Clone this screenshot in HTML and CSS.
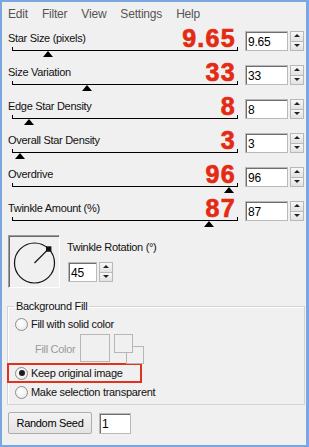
FILE: index.html
```html
<!DOCTYPE html>
<html lang="en">
<head>
  <meta charset="UTF-8">
  <title>Twinkle</title>
  <link rel="stylesheet" href="styles.css">
</head>
<body>
  <div class="window">
    <div class="menubar">
      <span>Edit</span><span>Filter</span><span>View</span><span>Settings</span><span>Help</span>
    </div>

    <div class="params">
      <div class="param">
        <div class="param-main">
          <div class="param-head"><span class="param-label">Star Size (pixels)</span><span class="param-big">9.65</span></div>
          <div class="track"><span class="thumb" style="left:16%"></span></div>
        </div>
        <div class="spin-field"><input class="num" value="9.65"><div class="spin-btns"><span class="up"></span><span class="down"></span></div></div>
      </div>
      <div class="param">
        <div class="param-main">
          <div class="param-head"><span class="param-label">Size Variation</span><span class="param-big">33</span></div>
          <div class="track"><span class="thumb" style="left:33%"></span></div>
        </div>
        <div class="spin-field"><input class="num" value="33"><div class="spin-btns"><span class="up"></span><span class="down"></span></div></div>
      </div>
      <div class="param">
        <div class="param-main">
          <div class="param-head"><span class="param-label">Edge Star Density</span><span class="param-big">8</span></div>
          <div class="track"><span class="thumb" style="left:7.5%"></span></div>
        </div>
        <div class="spin-field"><input class="num" value="8"><div class="spin-btns"><span class="up"></span><span class="down"></span></div></div>
      </div>
      <div class="param">
        <div class="param-main">
          <div class="param-head"><span class="param-label">Overall Star Density</span><span class="param-big">3</span></div>
          <div class="track"><span class="thumb" style="left:3.5%"></span></div>
        </div>
        <div class="spin-field"><input class="num" value="3"><div class="spin-btns"><span class="up"></span><span class="down"></span></div></div>
      </div>
      <div class="param">
        <div class="param-main">
          <div class="param-head"><span class="param-label">Overdrive</span><span class="param-big">96</span></div>
          <div class="track"><span class="thumb" style="left:96%"></span></div>
        </div>
        <div class="spin-field"><input class="num" value="96"><div class="spin-btns"><span class="up"></span><span class="down"></span></div></div>
      </div>
      <div class="param">
        <div class="param-main">
          <div class="param-head"><span class="param-label">Twinkle Amount (%)</span><span class="param-big">87</span></div>
          <div class="track"><span class="thumb" style="left:87%"></span></div>
        </div>
        <div class="spin-field"><input class="num" value="87"><div class="spin-btns"><span class="up"></span><span class="down"></span></div></div>
      </div>
    </div>

    <div class="rotation">
      <div class="dial">
        <svg width="50" height="51" viewBox="0 0 50 51">
          <circle cx="25.5" cy="27" r="20" fill="none" stroke="#111" stroke-width="1.2"/>
          <line x1="25.5" y1="27" x2="39.6" y2="12.9" stroke="#111" stroke-width="1.2"/>
          <rect x="37" y="10.3" width="5.4" height="5.4" fill="#111"/>
        </svg>
      </div>
      <div class="rot-side">
        <span class="rot-label">Twinkle Rotation (°)</span>
        <div class="spin-field small"><input class="num" value="45"><div class="spin-btns"><span class="up"></span><span class="down"></span></div></div>
      </div>
    </div>

    <fieldset class="group">
      <legend>Background Fill</legend>
      <div class="radio-row first"><span class="radio"></span>Fill with solid color</div>
      <div class="fill-color">
        <span class="fill-label">Fill Color</span>
        <span class="swatch"></span>
        <span class="swatches"><span class="sw-front"></span><span class="sw-back"></span></span>
      </div>
      <div class="radio-row marked"><span class="radio checked"></span>Keep original image</div>
      <div class="radio-row"><span class="radio"></span>Make selection transparent</div>
    </fieldset>

    <div class="seed-row">
      <button class="btn">Random Seed</button>
      <input class="num seed" value="1">
    </div>
  </div>
</body>
</html>
```

FILE: styles.css
```css
body { margin: 0; font-family: "Liberation Sans", Arial, sans-serif; }
.window { width: 309px; height: 447px; box-sizing: border-box; border: 2px solid #7aa7e0; border-right-width: 3px; background: #f0f0f0; color: #000; font-size: 11px; letter-spacing: -0.3px; }

.menubar { display: flex; gap: 14px; height: 24px; align-items: center; padding-left: 6px; font-size: 12px; letter-spacing: -0.2px; color: #555; }

.params { padding-left: 6px; }
.param { display: flex; height: 34px; }
.param-main { width: 230px; }
.param-head { display: flex; justify-content: space-between; align-items: flex-start; height: 24px; }
.param-label { line-height: 14px; margin-top: 5px; color: #111; }
.param-big { font-size: 25px; font-weight: bold; line-height: 25px; letter-spacing: 1.3px; color: #e42a12; -webkit-text-stroke: 0.7px #e42a12; padding-right: 2px; }
.track { position: relative; margin-left: 4px; width: 226px; height: 1px; background: #000; }
.track::before, .track::after { content: ""; position: absolute; top: -3px; width: 1px; height: 4px; background: #000; }
.track::before { left: 0; }
.track::after { right: 0; }
.thumb { position: absolute; top: 1px; width: 0; height: 0; margin-left: -5px; border-left: 5px solid transparent; border-right: 5px solid transparent; border-bottom: 6px solid #000; }

.spin-field { display: flex; gap: 2px; margin: 5px 0 0 7px; }
.num { box-sizing: border-box; width: 43px; height: 20px; margin: 0; padding: 1px 0 0 2px; border: 1px solid #b9b9b9; box-shadow: inset 1px 1px 0 #6e6e6e; background: #fff; font-family: "Liberation Sans", Arial, sans-serif; font-size: 12px; letter-spacing: -0.2px; color: #000; }
.spin-btns { display: flex; flex-direction: column; width: 14px; height: 20px; }
.spin-btns span { position: relative; flex: 1; border: 1px solid #b8b8b8; background: linear-gradient(#f7f7f7, #e2e2e2); }
.spin-btns span + span { border-top: none; }
.spin-btns span::after { content: ""; position: absolute; left: 50%; top: 50%; margin: -2px 0 0 -3px; border-left: 3px solid transparent; border-right: 3px solid transparent; }
.spin-btns .up::after { border-bottom: 3px solid #222; }
.spin-btns .down::after { border-top: 3px solid #222; }

.rotation { display: flex; margin: 5px 0 0 6px; }
.dial { width: 52px; height: 53px; box-sizing: border-box; border: 1px solid; border-color: #9c9c9c #fff #fff #9c9c9c; box-shadow: inset 1px 1px 0 #6a6a6a; }
.dial svg { display: block; }
.rot-side { display: flex; flex-direction: column; margin-left: 7px; }
.rot-label { line-height: 14px; margin-top: 5px; color: #111; }
.spin-field.small { margin: 8px 0 0 1px; }
.spin-field.small .num { width: 29px; }

.group { margin: 11px 1px 0 5px; padding: 0 0 4px 6px; border: 1px solid #d4d4d4; box-shadow: inset 1px 1px 0 #fff; }
.group legend { padding: 0 2px; line-height: 14px; color: #111; }
.radio-row { display: flex; align-items: center; height: 16px; margin-left: 1px; color: #111; }
.radio-row.first { margin-top: 3px; }
.radio { box-sizing: border-box; width: 13px; height: 13px; margin-right: 3px; border: 1px solid #8c8c8c; border-radius: 50%; background: radial-gradient(circle at 40% 35%, #fff, #e6e6e6); display: flex; align-items: center; justify-content: center; }
.radio.checked::after { content: ""; width: 6px; height: 6px; border-radius: 50%; background: #1c1c1c; }
.radio-row.marked { width: 125px; margin: 0 0 0 -7px; padding-left: 6px; border: 2px solid #e0331d; }
.radio-row + .radio-row { margin-top: 1px; }

.fill-color { display: flex; align-items: center; height: 29px; margin-top: 2px; padding-left: 21px; color: #9b9b9b; }
.fill-label { width: 45px; }
.swatch { width: 30px; height: 28px; box-sizing: border-box; border: 1px solid #b6b6b6; margin-top: -1px; }
.swatches { display: grid; margin-left: 4px; align-self: flex-start; }
.swatches span { grid-area: 1 / 1; width: 19px; height: 19px; box-sizing: border-box; border: 1px solid #b6b6b6; background: #f0f0f0; }
.swatches .sw-front { z-index: 1; }
.swatches .sw-back { margin: 12px 0 0 12px; width: 18px; height: 18px; }

.seed-row { display: flex; gap: 7px; margin: 7px 0 0 6px; align-items: flex-start; }
.btn { box-sizing: border-box; width: 84px; height: 22px; padding: 0; border: 1px solid #adadad; border-radius: 2px; background: linear-gradient(#f3f3f3, #e3e3e3); font-family: "Liberation Sans", Arial, sans-serif; font-size: 11px; letter-spacing: -0.3px; color: #000; }
.num.seed { width: 32px; height: 21px; margin-top: 1px; }
```
